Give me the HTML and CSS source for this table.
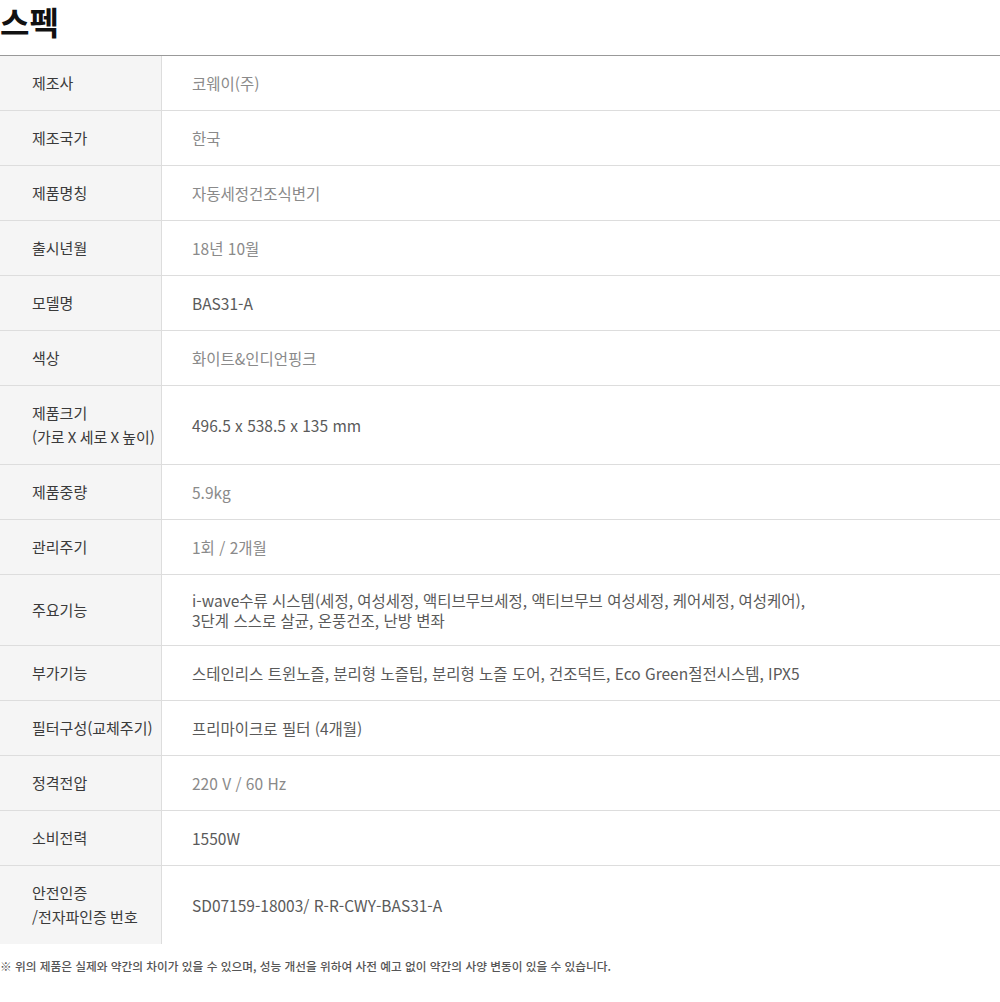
FILE: index.html
```html
<!DOCTYPE html>
<html lang="ko">
<head>
<meta charset="utf-8">
<link rel="stylesheet" href="styles.css">
</head>
<body>
<h2 class="title">스펙</h2>
<table class="spec">
  <tr><th>제조사</th><td class="light">코웨이(주)</td></tr>
  <tr><th>제조국가</th><td class="light">한국</td></tr>
  <tr><th>제품명칭</th><td class="light">자동세정건조식변기</td></tr>
  <tr><th>출시년월</th><td class="light">18년 10월</td></tr>
  <tr><th>모델명</th><td>BAS31-A</td></tr>
  <tr><th>색상</th><td class="light">화이트&amp;인디언핑크</td></tr>
  <tr><th>제품크기<br>(가로 X 세로 X 높이)</th><td>496.5 x 538.5 x 135 mm</td></tr>
  <tr><th>제품중량</th><td class="light">5.9kg</td></tr>
  <tr><th>관리주기</th><td class="light">1회 / 2개월</td></tr>
  <tr class="tight"><th>주요기능</th><td><span class="ln">i-wave수류 시스템(세정, 여성세정, 액티브무브세정, 액티브무브 여성세정, 케어세정, 여성케어),</span><span class="ln">3단계 스스로 살균, 온풍건조, 난방 변좌</span></td></tr>
  <tr><th>부가기능</th><td>스테인리스 트윈노즐, 분리형 노즐팁, 분리형 노즐 도어, 건조덕트, Eco Green절전시스템, IPX5</td></tr>
  <tr><th>필터구성(교체주기)</th><td>프리마이크로 필터 (4개월)</td></tr>
  <tr><th>정격전압</th><td class="light">220 V / 60 Hz</td></tr>
  <tr><th>소비전력</th><td>1550W</td></tr>
  <tr><th>안전인증<br>/전자파인증 번호</th><td>SD07159-18003/ R-R-CWY-BAS31-A</td></tr>
</table>
<p class="note">※ 위의 제품은 실제와 약간의 차이가 있을 수 있으며, 성능 개선을 위하여 사전 예고 없이 약간의 사양 변동이 있을 수 있습니다.</p>
</body>
</html>
```
FILE: styles.css
```css
html, body {
  margin: 0;
  padding: 0;
  background: #fff;
}
body {
  font-family: "Noto Sans CJK KR", "Noto Sans", sans-serif;
  color: #333;
}
.title {
  margin: 0;
  height: 55px;
  font-size: 32px;
  font-weight: 700;
  line-height: 42px;
  color: #111;
  border-bottom: 1px solid #999;
}
.spec {
  width: 1000px;
  border-collapse: collapse;
  table-layout: fixed;
}
.spec th,
.spec td {
  padding: 15px 0;
  line-height: 24px;
  font-size: 15.5px;
  text-align: left;
  vertical-align: middle;
  border-bottom: 1px solid #ddd;
}
.spec tr:last-child th,
.spec tr:last-child td {
  border-bottom: 0;
}
.spec th {
  width: 129px;
  padding-left: 32px;
  background: #f5f5f5;
  border-right: 1px solid #ddd;
  font-weight: 400;
  font-size: 15px;
  white-space: nowrap;
  word-spacing: -1px;
  color: #3a3a3a;
}
.spec td {
  padding-left: 30px;
  color: #5a5a5a;
}
.spec td.light {
  color: #8a8a8a;
}
.spec tr.tight td {
  line-height: 20px;
  padding-top: 15px;
  padding-bottom: 15px;
}
.ln {
  display: block;
}
.note {
  margin: 14px 0 0;
  font-size: 11.7px;
  line-height: 16px;
  color: #555;
  font-weight: 500;
}
```
